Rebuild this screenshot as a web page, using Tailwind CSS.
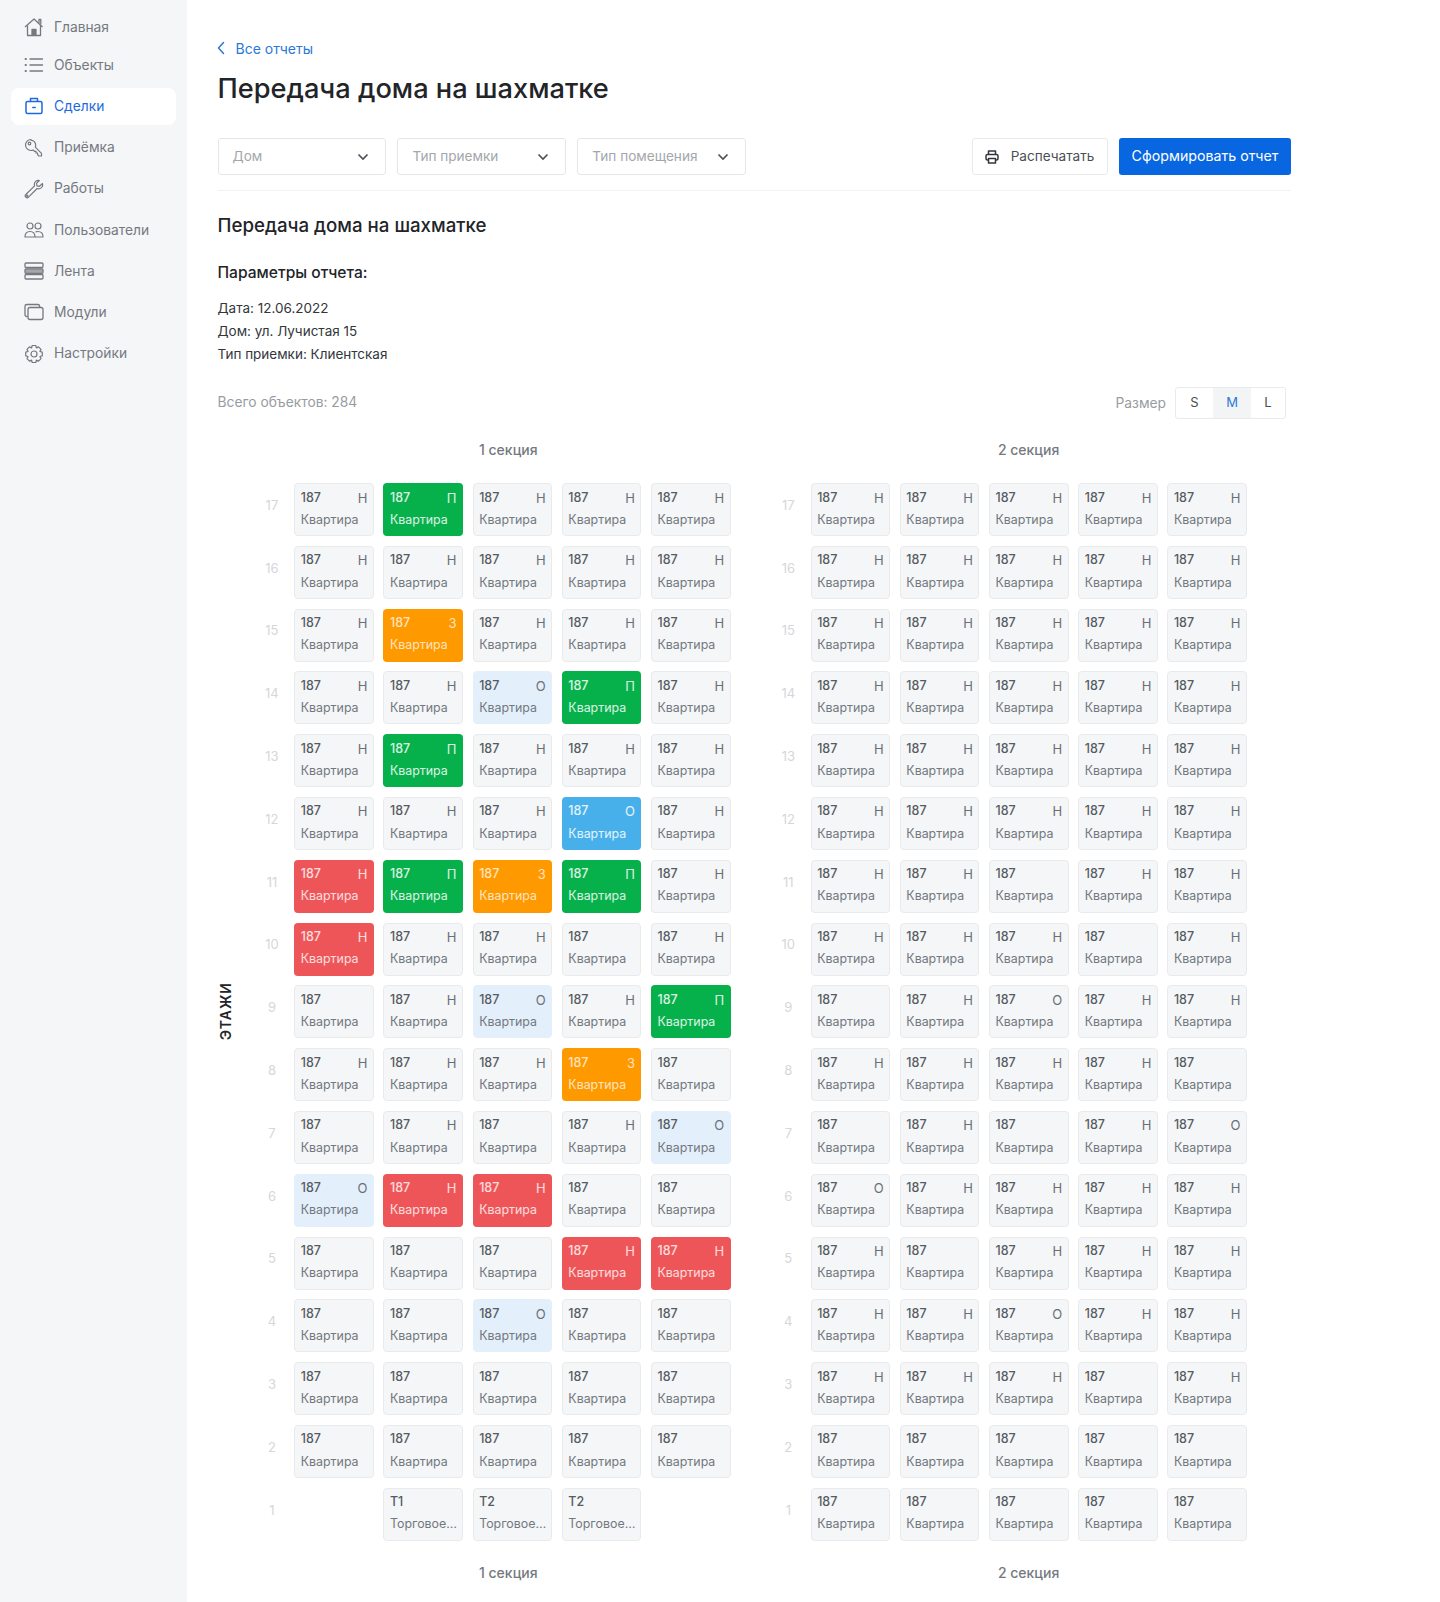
<!DOCTYPE html>
<html lang="en">
<head>
    <meta charset="UTF-8">
    <meta name="viewport" content="width=device-width, initial-scale=1.0">
    <title>Передача дома на шахматке</title>
    <script src="https://cdn.jsdelivr.net/npm/@tailwindcss/browser@4"></script>
</head>
<body class="bg-white font-['Inter',sans-serif]">
    <div class="flex min-h-[1602px]">
        <!-- sidebar -->
        <aside class="w-[187px] shrink-0 bg-[#f4f6f8] pt-[8.500px] px-[11px] flex flex-col gap-[4.200px] text-[13.800px] text-[#75797f]">
            <a class="h-[37px] mb-[-3px] flex items-center gap-[10px] pl-[13px]">
                <svg class="w-[20px] h-[20px] shrink-0" viewBox="0 0 20 20" fill="none" stroke="#75797f" stroke-width="1.300" stroke-linejoin="round"><path d="M1 10 10 2l8.500 8"/><path d="M3.500 8.500V18.500h13V8.500"/><path d="M15 6V2.500h1.800v5" /><path d="M8 18.500v-6h4v6" fill="#75797f"/></svg>
                <span>Главная</span>
            </a>
            <a class="h-[37px] flex items-center gap-[10px] pl-[13px]">
                <svg class="w-[20px] h-[20px] shrink-0" viewBox="0 0 20 20" fill="none" stroke="#75797f" stroke-width="1.300" stroke-linecap="round"><path d="M6 4h12.500M6 10h12.500M6 16h12.500"/><path d="M1.500 4h.5M1.500 10h.5M1.500 16h.5" stroke-width="1.800"/></svg>
                <span>Объекты</span>
            </a>
            <a class="h-[37px] flex items-center gap-[10px] pl-[13px] bg-white rounded-[8px] text-[#1d6ae0]">
                <svg class="w-[20px] h-[20px] shrink-0" viewBox="0 0 20 20" fill="none" stroke="#1d6ae0" stroke-width="1.500" stroke-linejoin="round"><rect x="2" y="5.500" width="16" height="12" rx="1.500"/><path d="M6.500 5.500V2.500h7v3"/><path d="M8.800 11.500h2.400" stroke-linecap="round"/></svg>
                <span>Сделки</span>
            </a>
            <a class="h-[37px] flex items-center gap-[10px] pl-[13px]">
                <svg class="w-[20px] h-[20px] shrink-0" viewBox="0 0 20 20" fill="none" stroke="#75797f" stroke-width="1.200" stroke-linejoin="round"><path d="M7 1.500a5.500 5.500 0 1 0 0 11c.8 0 1.500-.2 2.200-.5l1.300 1.400h1.500v1.600h1.600v1.600l1.300 1.400h2.600v-2.600l-6.200-6.200c.2-.6.400-1.200.4-1.700a5.500 5.500 0 0 0-4.700-5.400Z"/><circle cx="5.500" cy="5.500" r="1.300"/></svg>
                <span>Приёмка</span>
            </a>
            <a class="h-[37px] flex items-center gap-[10px] pl-[13px]">
                <svg class="w-[20px] h-[20px] shrink-0" viewBox="0 0 20 20" fill="none" stroke="#75797f" stroke-width="1.200" stroke-linejoin="round"><path d="M18.500 4.500 15.500 7.300 13 6.800 12.500 4.300 15.300 1.500c-2.400-.6-5 1-5 3.800 0 .6.100 1.100.3 1.600L1.800 15.500c-.9.900-.7 2 0 2.700.7.700 1.800.8 2.700 0l8.600-8.700c.5.200 1 .3 1.600.3 2.800 0 4.400-2.500 3.800-4.800Z"/><circle cx="3.200" cy="16.800" r=".6"/></svg>
                <span>Работы</span>
            </a>
            <a class="h-[37px] flex items-center gap-[10px] pl-[13px]">
                <svg class="w-[20px] h-[20px] shrink-0" viewBox="0 0 20 20" fill="none" stroke="#75797f" stroke-width="1.200" stroke-linejoin="round"><circle cx="6" cy="6" r="3"/><circle cx="14" cy="6" r="3"/><path d="M1 17c0-3.500 2-5.500 5-5.500s5 2 5 5.500Z"/><path d="M11.500 11.800c.7-.2 1.600-.3 2.500-.3 3 0 5 2 5 5.500h-8"/></svg>
                <span>Пользователи</span>
            </a>
            <a class="h-[37px] flex items-center gap-[10px] pl-[13px]">
                <svg class="w-[20px] h-[20px] shrink-0" viewBox="0 0 20 20" fill="none" stroke="#75797f" stroke-width="1.300"><rect x="1" y="2" width="18" height="4.500" rx="1"/><rect x="1" y="7.800" width="18" height="4.500" rx="1" fill="#a3a6aa"/><rect x="1" y="13.500" width="18" height="4.500" rx="1"/></svg>
                <span>Лента</span>
            </a>
            <a class="h-[37px] flex items-center gap-[10px] pl-[13px]">
                <svg class="w-[20px] h-[20px] shrink-0" viewBox="0 0 20 20" fill="none" stroke="#75797f" stroke-width="1.300" stroke-linejoin="round"><path d="M3.500 14.500H2.800A1.800 1.800 0 0 1 1 12.700V4.300c0-1 .8-1.800 1.800-1.800h11c1 0 1.800.8 1.800 1.800V5"/><rect x="4" y="5.500" width="15" height="12" rx="2"/></svg>
                <span>Модули</span>
            </a>
            <a class="h-[37px] flex items-center gap-[10px] pl-[13px]">
                <svg class="w-[20px] h-[20px] shrink-0" viewBox="0 0 20 20" fill="none" stroke="#75797f" stroke-width="1.200" stroke-linejoin="round"><path d="M8.200 1.500h3.600l.6 2.400 2.100-1 2.500 2.500-1.100 2.100 2.400.7v3.600l-2.400.7 1.100 2.100-2.500 2.500-2.100-1-.6 2.400H8.200l-.6-2.400-2.100 1L3 14.600l1.100-2.100-2.400-.7V8.200l2.400-.7L3 5.400l2.500-2.500 2.100 1Z"/><circle cx="10" cy="10" r="3"/></svg>
                <span>Настройки</span>
            </a>
        </aside>

        <!-- main -->
        <main class="pl-[30.500px] w-[1104px]">
            <a class="mt-[38px] h-[20px] flex items-center gap-[11px] text-[14px] text-[#2a78d8]">
                <svg class="w-[8px] h-[14px] ml-[-1px]" viewBox="0 0 8 14" fill="none" stroke="#2a78d8" stroke-width="1.500" stroke-linecap="round" stroke-linejoin="round"><path d="M6.500 1.500 1.500 7l5 5.500"/></svg>
                <span>Все отчеты</span>
            </a>
            <h1 class="mt-[13px] text-[27.200px] leading-[36px] font-medium text-[#222428]">Передача дома на шахматке</h1>

            <div class="mt-[31px] pb-[15px] border-b border-[#f1f2f4] flex items-center text-[13.600px]">
                <div class="w-[168.500px] h-[37px] mr-[11.400px] px-[14px] rounded-[3px] border border-[#e4e6e9] flex items-center justify-between text-[#a3a7ab]">
                    <span class="mt-[-1px]">Дом</span>
                    <svg class="w-[12px] h-[8px] mr-[2px]" viewBox="0 0 12 8" fill="none" stroke="#4a4f55" stroke-width="1.600"><path d="m1.500 1.500 4.500 4.500 4.500-4.500"/></svg>
                </div>
                <div class="w-[168.500px] h-[37px] mr-[11.400px] px-[14px] rounded-[3px] border border-[#e4e6e9] flex items-center justify-between text-[#a3a7ab]">
                    <span class="mt-[-1px]">Тип приемки</span>
                    <svg class="w-[12px] h-[8px] mr-[2px]" viewBox="0 0 12 8" fill="none" stroke="#4a4f55" stroke-width="1.600"><path d="m1.500 1.500 4.500 4.500 4.500-4.500"/></svg>
                </div>
                <div class="w-[168.500px] h-[37px] px-[14px] rounded-[3px] border border-[#e4e6e9] flex items-center justify-between text-[#a3a7ab]">
                    <span class="mt-[-1px]">Тип помещения</span>
                    <svg class="w-[12px] h-[8px] mr-[2px]" viewBox="0 0 12 8" fill="none" stroke="#4a4f55" stroke-width="1.600"><path d="m1.500 1.500 4.500 4.500 4.500-4.500"/></svg>
                </div>
                <button class="ml-auto w-[136px] h-[37px] rounded-[3px] border border-[#e8eaec] flex items-center justify-center gap-[12px] text-[#4a4f55]">
                    <svg class="w-[14px] h-[14px]" viewBox="0 0 14 14" fill="none" stroke="#33373c" stroke-width="1.500" stroke-linejoin="round"><path d="M3.500 4.500V1h7v3.500"/><rect x="1" y="4.500" width="12" height="5.500" rx="1.500"/><rect x="3.500" y="8.500" width="7" height="4.500" fill="white"/></svg>
                    <span class="mt-[-1px]">Распечатать</span>
                </button>
                <button class="ml-[11.500px] w-[172px] h-[37px] rounded-[3px] bg-[#0766e0] text-white text-[14.200px] pb-[1px]">Сформировать отчет</button>
            </div>

            <h2 class="mt-[21px] text-[18.700px] leading-[28px] font-medium text-[#222428]">Передача дома на шахматке</h2>
            <p class="mt-[21px] text-[15.600px] leading-[24px] font-medium text-[#222428]">Параметры отчета:</p>
            <div class="mt-[11.500px] text-[13.500px] leading-[23px] text-[#33373c]">
                <p>Дата: 12.06.2022</p>
                <p>Дом: ул. Лучистая 15</p>
                <p>Тип приемки: Клиентская</p>
            </div>

            <div class="mt-[21.500px] h-[32px] pr-[5px] flex items-center text-[13.800px] text-[#989ca1]">
                <span class="mt-[-1px]">Всего объектов: 284</span>
                <span class="ml-auto mr-[9px]">Размер</span>
                <div class="w-[111px] h-[32px] flex rounded-[3px] border border-[#e8eaec] text-[13px]">
                    <span class="w-[37px] flex items-center justify-center text-[#4a4f55]">S</span>
                    <span class="w-[38px] flex items-center justify-center bg-[#f2f4f6] text-[#2a78d8]">M</span>
                    <span class="flex-1 flex items-center justify-center text-[#4a4f55]">L</span>
                </div>
            </div>

            <div class="mt-[20px] flex">
                <div class="w-[39.500px] flex items-center">
                    <span class="[writing-mode:vertical-rl] rotate-180 text-[14px] font-semibold tracking-[1px] text-[#222428] ml-[-2.500px]">ЭТАЖИ</span>
                </div>
                <div class="w-[473.600px] mr-[42.800px]" id="section1"></div>
                <div class="w-[473.600px]" id="section2"></div>
            </div>
        </main>
    </div>

    <script>
        // letter and colour of each flat, floors 17 down to 1
        // . no letter, n/o plain, g green, y orange, r red, b blue, l light blue, _ empty
        const section1 = ['ngnnn', 'nnnnn', 'nynnn', 'nnlgn', 'ngnnn', 'nnnbn', 'rgygn', 'rnn.n', '.nlng', 'nnny.', '.n.nl', 'lrr..', '...rr', '..l..', '.....', '.....', '_ttt_'];
        const section2 = ['nnnnn', 'nnnnn', 'nnnnn', 'nnnnn', 'nnnnn', 'nnnnn', 'nn.nn', 'nnn.n', '.nonn', 'nnnn.', '.n.no', 'onnnn', 'n.nnn', 'nnonn', 'nnn.n', '.....', '.....'];
        const styles = {
            plain: 'bg-[#f4f6f8] border border-[#e8eaec] text-[#565b61]',
            g: 'bg-[#06b04b] border border-transparent text-white/85',
            y: 'bg-[#ff9900] border border-transparent text-white/75',
            r: 'bg-[#ee5558] border border-transparent text-white/80',
            b: 'bg-[#47b0ea] border border-transparent text-white/85',
            l: 'bg-[#e4effc] border border-[#e4effc] text-[#565b61]'
        };
        const letters = { n: 'Н', o: 'О', g: 'П', y: 'З', r: 'Н', b: 'О', l: 'О', '.': '', t: '' };
        const shops = ['Т1', 'Т2', 'Т2'];

        function renderCell(code) {
            if (code === '_') return '<div class="w-[79.600px] h-[53px]"></div>';
            const colour = styles[code] || styles.plain;
            const coloured = colour !== styles.plain && code !== 'l';
            const isShop = code === 't';
            const num = isShop ? shops.shift() : '187';
            const name = isShop ? 'Торговое…' : 'Квартира';
            return `<div class="w-[79.600px] h-[53px] rounded-[4px] px-[5.500px] ${colour}">
                <div class="flex justify-between h-[27px] items-center text-[12.500px] leading-[20px]"><span class="font-medium">${num}</span><span class="text-[13px] ${coloured ? '' : 'text-[#6a6f75]'}">${letters[code]}</span></div>
                <div class="h-[18px] flex items-center text-[12.400px] whitespace-nowrap ${coloured ? '' : 'text-[#73787e]'}">${name}</div>
            </div>`;
        }

        function renderSection(el, rows, title, titleClass) {
            const heading = `<div class="h-[20px] flex items-center text-[14px] font-medium text-[#75797f] ${titleClass}">${title}</div>`;
            const body = rows.map((row, i) => `<div class="flex">
                <div class="w-[30px] mr-[7.400px] pb-[8px] flex items-center justify-center text-[13px] text-[#d5d7da]">${17 - i}</div>
                <div class="flex gap-x-[9.600px]">${row.split('').map(renderCell).join('')}</div>
            </div>`).join('');
            el.innerHTML = `${heading}<div class="mt-[24px] flex flex-col gap-y-[9.800px]">${body}</div><div class="mt-[21.500px]">${heading}</div>`;
        }

        renderSection(document.getElementById('section1'), section1, '1 секция', 'pl-[222px]');
        renderSection(document.getElementById('section2'), section2, '2 секция', 'pl-[224.500px]');
    </script>
</body>
</html>
